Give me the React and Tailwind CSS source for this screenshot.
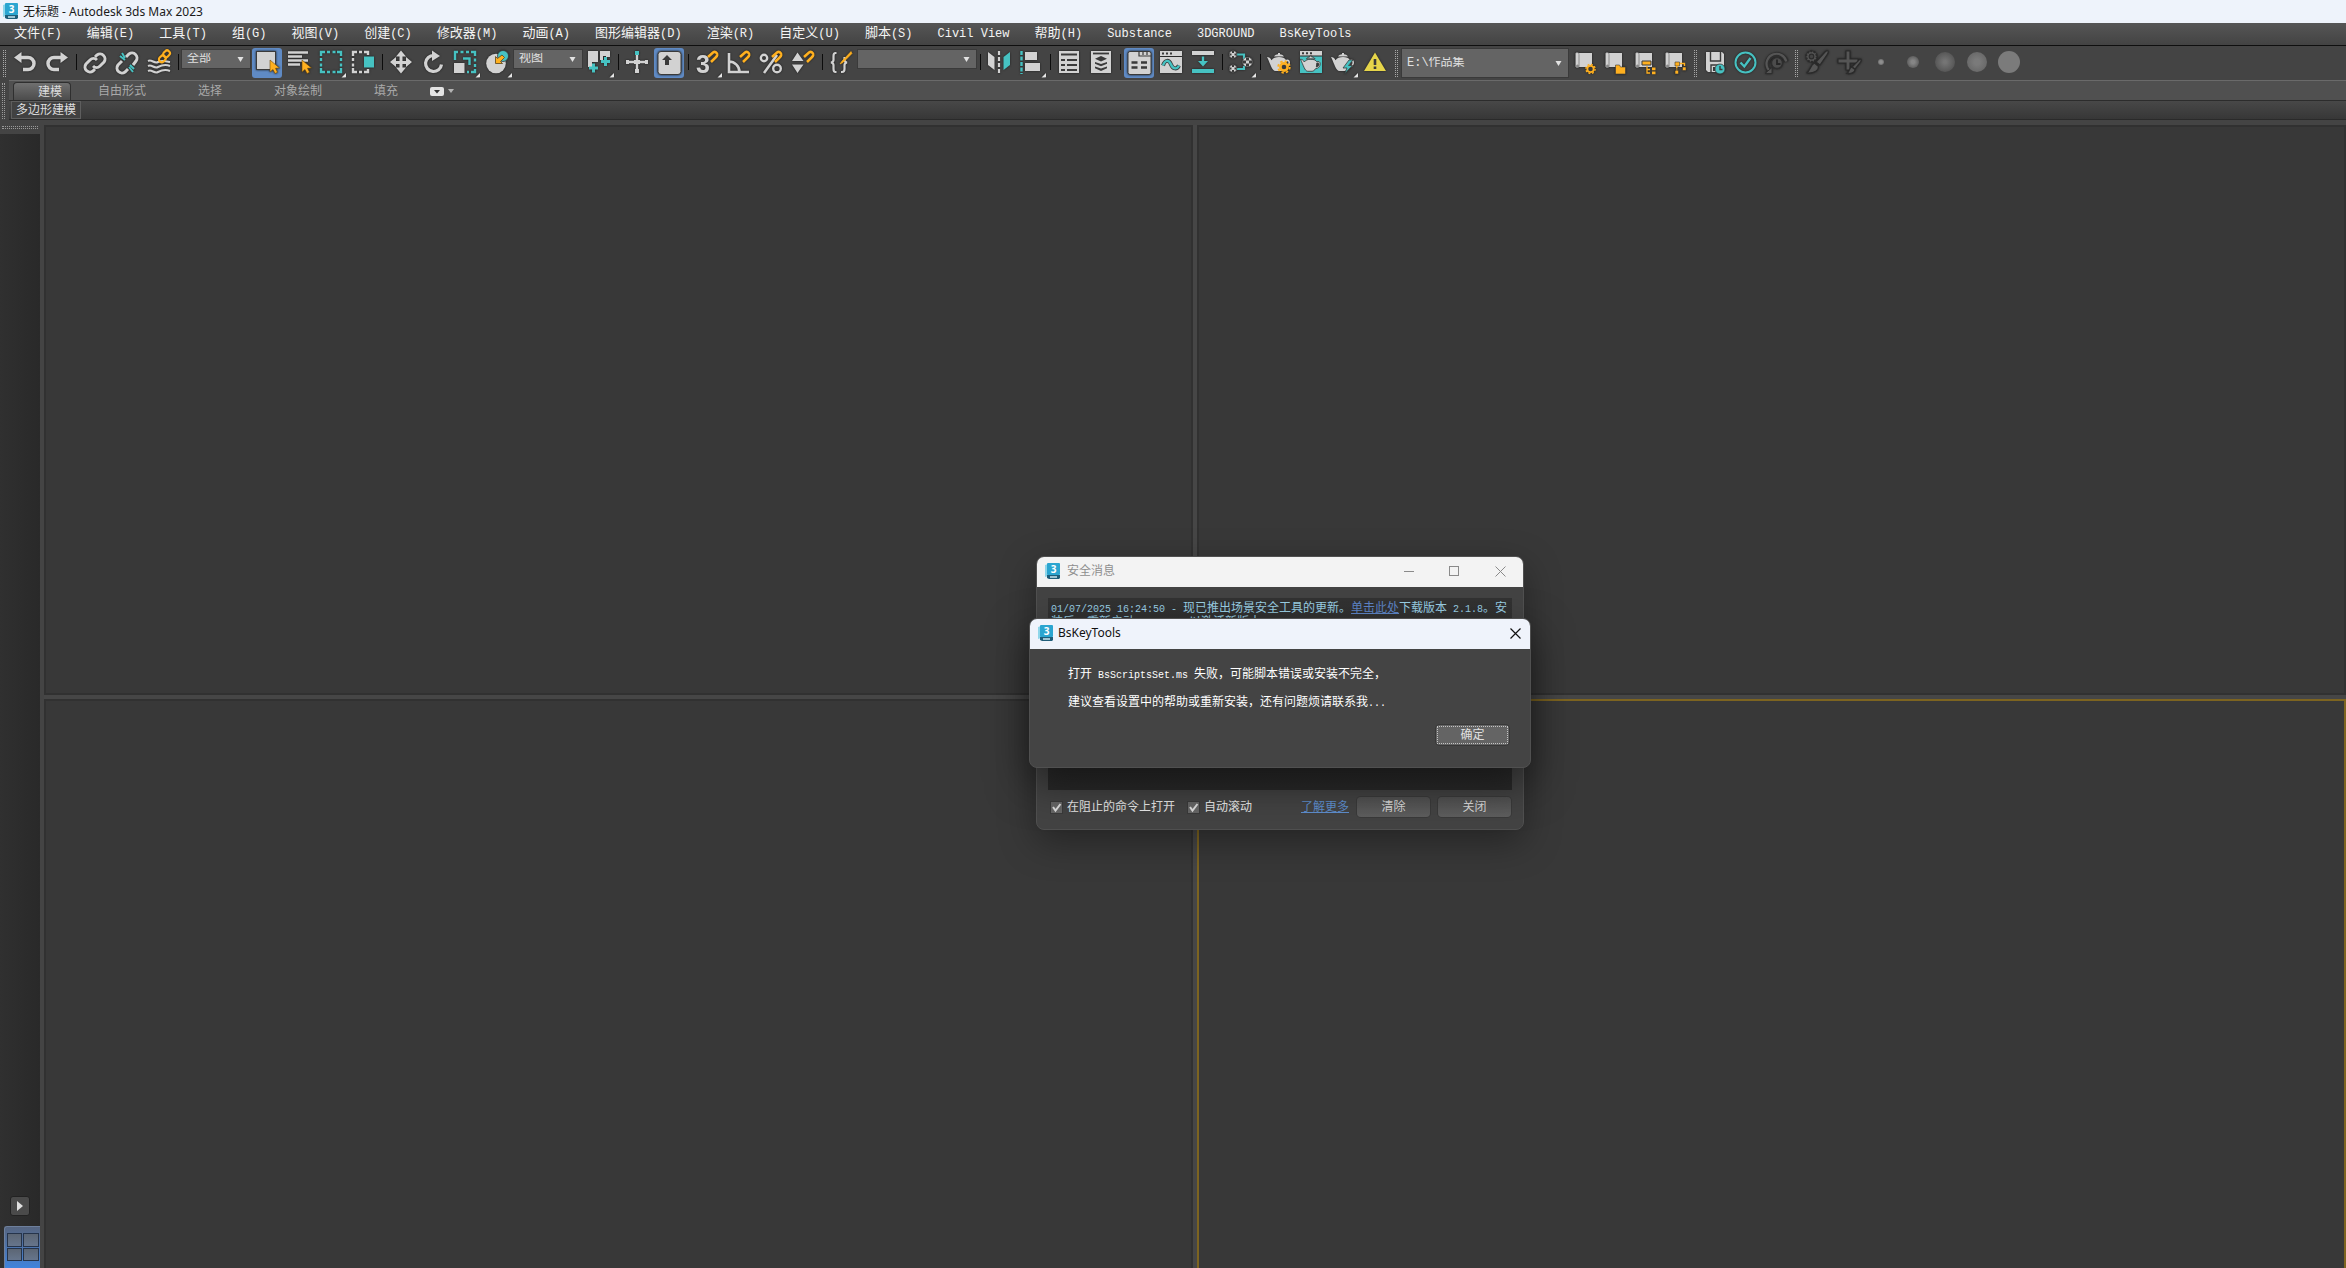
import React from "react";

const G = "#d2d2d2";
const T = "#46c2c2";
const O = "#ffb01f";
const D = "#3a3a3a";

const SANS = "font-['Noto_Sans','Noto_Sans_CJK_SC',sans-serif]";
const MONO = "font-['Liberation_Mono','Noto_Sans_CJK_SC',monospace]";

/* ---------- shared drawings ---------- */

function AppLogo() {
  return (
    <svg width="16" height="17" viewBox="0 0 16 17" aria-hidden="true" className="shrink-0">
      <path d="M0 2 3 1v12l-3 1z" fill="#8fd6ea" />
      <rect x="2" y="0" width="13" height="12" rx="1" fill="#2ba5d0" />
      <path d="M2 12h13v3l-1 1H4l-2-1z" fill="#1f5d79" />
      <rect x="5" y="13" width="7" height="2" fill="#9cc4d3" />
      <text x="8.500" y="9.500" fontSize="10" fontWeight="700" fill="#fff" textAnchor="middle" fontFamily="Open Sans, sans-serif">3</text>
    </svg>
  );
}

const Magnet = () => (
  <path d="M17 9l5-4.500c2-1.500 4.500.2 4.200 2.500-.2 1.200-.8 1.800-1.600 2.500L20 14" fill="none" stroke={O} strokeWidth="2.600" />
);
const Teapot = ({ fill = G }) => (
  <g fill={fill}>
    <path d="M4 9c2 0 3.500 1.200 4.500 3.200C10 10 12.500 9 16 9s6 1 7 3c2-1 4 0 4 2.500S24.500 20 21.500 20c-1 1.800-2.500 3-4 3h-5C9 23 7.500 16 4 9z" />
    <path d="M11 8.500c1-1.500 2.500-2 4-2.200V5h2v1.300c1.500.2 3 .7 4 2.200z" />
    <path d="M23 13.500c1.500-.5 2.500 0 2.500 1.200 0 1.600-1.300 3-3 3.300z" fill={D} />
  </g>
);
const Cursor = () => <path d="M19 12v12l3-2.500 2 4 2.500-1.200-2-4 4-.3z" fill={O} stroke="#6b4a10" strokeWidth=".6" />;
const Chain = () => (
  <>
    <path d="M14 18a5 5 0 0 0 7 0l4-4a5 5 0 0 0-7-7l-2 2" />
    <path d="M18 12a5 5 0 0 0-7 0l-4 4a5 5 0 0 0 7 7l2-2" />
  </>
);
const Scroll = () => (
  <>
    <path d="M8 5h14v14H8z" fill={G} />
    <path d="M7 4.500c-1.500 0-1.500 1-1.500 2V18c0 2 3.500 2 3.500 0V6.500c0-1.200-.5-2-2-2z" fill={G} stroke="#777" strokeWidth=".8" />
    <circle cx="7.500" cy="18" r="1.500" fill="#888" />
  </>
);

const ICONS = {
  undo: (
    <>
      <path d="M5 9.500 12.500 4v11z" fill={G} />
      <path d="M11 9.500h8a6 6 0 0 1 0 12h-5" fill="none" stroke={G} strokeWidth="3.500" />
    </>
  ),
  redo: (
    <>
      <path d="M27 9.500 19.500 4v11z" fill={G} />
      <path d="M21 9.500h-8a6 6 0 0 0 0 12h5" fill="none" stroke={G} strokeWidth="3.500" />
    </>
  ),
  link: (
    <g fill="none" stroke={G} strokeWidth="3">
      <Chain />
    </g>
  ),
  unlink: (
    <>
      <g fill="none" stroke={G} strokeWidth="3">
        <path d="M15 9l3-3a5 5 0 0 1 7 7l-3 4" />
        <path d="M11 13l-4 4a5 5 0 0 0 7 7l3-3" />
      </g>
      <path d="M9 8l5 4M11 5l3 5M19 17l4 4M18 19l4 5" stroke={T} strokeWidth="2" />
    </>
  ),
  bind: (
    <>
      <path d="M5 13c4-2 6 3 10 1s7-1 12 0M5 18c4-2 6 3 10 1s7-3 12-1M5 23c4-2 6 3 10 1s7-3 12-1" fill="none" stroke={G} strokeWidth="2" />
      <g fill="none" stroke={O} strokeWidth="2.200">
        <rect x="20" y="3.500" width="7" height="5.500" rx="2.500" transform="rotate(-45 23 6)" />
        <rect x="16" y="8" width="7" height="5.500" rx="2.500" transform="rotate(-45 19.500 11)" />
      </g>
    </>
  ),
  select: (
    <>
      <rect x="5.500" y="3.500" width="19" height="18" fill={G} stroke={D} />
      <Cursor />
    </>
  ),
  byName: (
    <>
      <path d="M5 4.500h20M5 8.500h14M5 12.500h20M5 16.500h12" stroke={G} strokeWidth="2.500" />
      <Cursor />
    </>
  ),
  region: (
    <path d="M6 8V4h4M22 4h4v4M26 20v4h-4M10 24H6v-4M12 4h3M17.500 4h3M12 24h3M17.500 24h3M6 10v3M6 15.500v3M26 10v3M26 15.500v3" fill="none" stroke={T} strokeWidth="2.400" />
  ),
  crossing: (
    <>
      <path d="M6 8V4h4M17 4h4v3M21 21v3h-4M10 24H6v-4M12 4h3M12 24h3M6 10v3M6 15.500v3" fill="none" stroke={G} strokeWidth="2.400" />
      <rect x="17" y="8.500" width="10" height="11" fill={T} />
    </>
  ),
  move: (
    <>
      <path d="M16 6v17M8 14.500h17" stroke={G} strokeWidth="3" />
      <path d="M16 2.500l5 6H11zM16 25.500l5-6H11zM5 14l6-5v10zM27 14l-6-5v10z" fill={G} />
    </>
  ),
  rotate: (
    <>
      <path d="M17 7.500a8 8 0 1 0 7.500 9" fill="none" stroke={G} strokeWidth="3.200" />
      <path d="M15 2.500l8 5.500-8 5z" fill={G} />
    </>
  ),
  scale: (
    <>
      <rect x="5" y="15" width="10.500" height="10" fill={G} />
      <path d="M6 12V4h3M11.500 4h3M17 4h3M22 4h4v4M26 10.500v3M26 16v3M26 21v3h-4M20 24h-2" fill="none" stroke={T} strokeWidth="2.400" />
      <path d="M14 10.500h6.500V17" fill="none" stroke={T} strokeWidth="2.400" />
    </>
  ),
  place: (
    <>
      <circle cx="15" cy="15.500" r="9.800" fill={G} />
      <circle cx="22" cy="8" r="5.500" fill={T} stroke={D} strokeWidth=".8" />
      <path d="M21 7l2.500 2.500-4 4 2 2h-7v-7l2 2z" fill={O} stroke="#5b4418" strokeWidth=".8" />
    </>
  ),
  pivot: (
    <>
      <path d="M5 3h10v11h-6v5H5zM17 3h10v6h-4v-1h-3v4h-3z" fill={G} />
      <path d="M10.500 15.500v9M6 20h9M22.500 9v9M18 13.500h9" stroke={T} strokeWidth="3" />
    </>
  ),
  manipulate: (
    <>
      <path d="M6 14h20M16 6v18" stroke={G} strokeWidth="2.400" />
      <path d="M5 12h3v4H5zM24 12h3v4h-3zM14 21h4v4h-4zM13 12h6v4h-6z" fill={G} />
      <rect x="14" y="3" width="4" height="4" fill={T} />
    </>
  ),
  keyboard: (
    <>
      <rect x="5" y="3.500" width="23" height="23" rx="3" fill={G} stroke={D} />
      <path d="M14 7l5 5h-3v5h-4v-5H9z" fill={D} />
    </>
  ),
  snap3: (
    <>
      <text x="5" y="25" fontSize="25" fontWeight="700" fill={G} fontFamily="Liberation Sans, sans-serif">3</text>
      <Magnet />
    </>
  ),
  angle: (
    <>
      <path d="M6 5v19h20M6 13.500A10.500 10.500 0 0 1 16.500 24" fill="none" stroke={G} strokeWidth="2.600" />
      <Magnet />
    </>
  ),
  percent: (
    <>
      <circle cx="9" cy="10" r="3.200" fill="none" stroke={G} strokeWidth="2.400" />
      <circle cx="22" cy="20.500" r="3.800" fill="none" stroke={G} strokeWidth="2.400" />
      <path d="M22 7 9 25" stroke={G} strokeWidth="2.600" />
      <Magnet />
    </>
  ),
  spinner: (
    <>
      <path d="M10.500 4.500l6 8.500H5zM10.500 25l6-8.500H5z" fill={G} />
      <Magnet />
    </>
  ),
  braces: (
    <>
      <path d="M11.500 5h-1Q8.500 5 8.500 8v4q0 2-2.500 2.500 2.500.5 2.500 2.500v4q0 3 2 3h1M16 24h1q2.500 0 2.500-3v-4q0-2 2.500-2.500-2.500-.5-2.500-2.500V9" fill="none" stroke={G} strokeWidth="2.200" />
      <path d="M26 3.500 17 13l-2 3 3-1.500 9-9z" fill={O} stroke={O} strokeWidth=".6" />
    </>
  ),
  mirror: (
    <>
      <path d="M5 4l6.500 5v13L5 17z" fill={G} />
      <path d="M27 4l-6.500 5v13l6.500-5z" fill={T} />
      <path d="M16 3v23" stroke={G} strokeWidth="2.200" strokeDasharray="4 2" />
    </>
  ),
  align: (
    <>
      <path d="M6.500 3v23" stroke={T} strokeWidth="2.400" strokeDasharray="4 1.500" />
      <path d="M10 4h12v8H10zM10 15h15v8H10z" fill={G} />
    </>
  ),
  layers: (
    <>
      <rect x="6" y="3" width="20" height="22" fill={G} />
      <path d="M8 6.500h16M8 12h4M14 12h10M8 17h4M14 17h10M8 22h4M14 22h10" stroke={D} strokeWidth="2.200" />
    </>
  ),
  stack: (
    <>
      <rect x="6" y="3" width="20" height="22" fill={G} />
      <path d="M8 5.500h16" stroke={D} strokeWidth="1.800" />
      <path d="M16 8l6 2.800-6 2.800-6-2.800zM10 14l6 2 6-2v1.800l-6 2.500-6-2.500zM10 18.500l6 2 6-2v1.800L16 23l-6-2.700z" fill={D} />
    </>
  ),
  ribbon: (
    <>
      <rect x="5" y="3.500" width="23" height="23" rx="2" fill={G} stroke={D} />
      <path d="M16 4v4h12M20 4v3M24 4v3" fill="none" stroke={D} strokeWidth="1.200" />
      <path d="M8.500 14.500h6M18 14.500h6M8.500 19.500h6M18 19.500h6" stroke={D} strokeWidth="2.600" />
    </>
  ),
  curve: (
    <>
      <path d="M5 3h22v5H5zM5 9h22v16H5z" fill={G} />
      <path d="M7 5.500h2M11 5.500h2M15 5.500h2" stroke={D} strokeWidth="2" />
      <path d="M8 17.500c2-6 6-6 8-1s6 5 8 1" fill="none" stroke={D} strokeWidth="4" />
      <path d="M8 17.500c2-6 6-6 8-1s6 5 8 1" fill="none" stroke={T} strokeWidth="2.400" />
    </>
  ),
  dope: (
    <>
      <path d="M5 3h22v4H5z" fill={G} />
      <path d="M5 21h22v4H5z" fill={T} />
      <path d="M14.800 8.500h2.400V13h3.800l-5 5.500-5-5.500h3.800z" fill={T} />
    </>
  ),
  schematic: (
    <>
      <path d="M12 6.500h7V11M12 21h7v-3" fill="none" stroke={T} strokeWidth="2.200" />
      <g fill={G} stroke={D} strokeWidth=".6">
        <circle cx="8" cy="6.500" r="3.800" />
        <circle cx="8" cy="20.500" r="3.800" />
        <circle cx="22.500" cy="14" r="5" />
      </g>
      <g fill={D}>
        <path d="M7 3h2v2H7zM7 8h2v2H7zM4.500 5.500h2v2h-2zM9.500 5.500h2v2h-2zM7 17h2v2H7zM7 22h2v2H7zM4.500 19.500h2v2h-2zM9.500 19.500h2v2h-2z" />
        <path d="M21 9.500h3v3h-3zM21 15.500h3v3h-3zM18 12.500h3v3h-3zM24 12.500h3v3h-3z" />
      </g>
    </>
  ),
  renderSetup: (
    <>
      <Teapot />
      <circle cx="21" cy="19" r="3.600" fill={D} stroke={O} strokeWidth="2.600" />
      <circle cx="21" cy="19" r="5.800" fill="none" stroke={O} strokeWidth="1.800" strokeDasharray="2.400 2.150" />
    </>
  ),
  frame: (
    <>
      <path d="M5 3h22v4.500H5z" fill={G} />
      <path d="M7 5.200h2M11 5.200h2M15 5.200h2" stroke={D} strokeWidth="2" />
      <path d="M5 8.500h22V25H5z" fill={T} />
      <g transform="translate(2 3.500) scale(.86)">
        <g stroke={D} strokeWidth="1"><Teapot /></g>
      </g>
    </>
  ),
  render: (
    <>
      <Teapot />
      <path d="M22 12l-6 8h4l-2.500 6 8-8.500h-4L26 12z" fill={T} stroke={D} strokeWidth=".8" />
    </>
  ),
  warning: (
    <>
      <path d="M16 4.500 27 23H5z" fill="#e6d54a" />
      <path d="M16 11v6M16 18.500V21" stroke={D} strokeWidth="2.600" />
    </>
  ),
  projGear: (
    <>
      <Scroll />
      <circle cx="20.500" cy="21" r="3.200" fill={D} stroke={O} strokeWidth="1.800" />
      <circle cx="20.500" cy="21" r="4.600" fill="none" stroke={O} strokeWidth="1.400" strokeDasharray="1.900 1.700" />
    </>
  ),
  projFolder: (
    <>
      <Scroll />
      <path d="M15.500 17h4l1 2h5v7h-10z" fill={O} stroke={D} strokeWidth=".6" />
    </>
  ),
  projTree: (
    <>
      <Scroll />
      <path d="M12 13h9v4h-9z" fill={O} stroke={D} />
      <path d="M17 18v7h3M17 21.500h3" fill="none" stroke={O} strokeWidth="1.300" />
      <path d="M22 19.500h3.500v2.800H22zM22 23.500h3.500v2.800H22z" fill={O} />
    </>
  ),
  projNodes: (
    <>
      <Scroll />
      <path d="M15 14h4.500v4H15zM22.500 19h3.500v3.500h-3.500zM15 22.500h3.500V26H15z" fill={O} stroke={D} strokeWidth=".6" />
      <path d="M16.800 18v2.500M16.800 21.500v1M20 15.500h4.500V18" fill="none" stroke={O} strokeWidth="1.400" />
    </>
  ),
  autosave: (
    <>
      <path d="M6 4h16l2 2v18H8l-2-2z" fill={G} />
      <path d="M10.500 4v9h10V4M11 24v-7h8" fill="none" stroke={D} strokeWidth="1.400" />
      <rect x="13" y="19" width="2" height="4" fill={D} />
      <circle cx="20" cy="21" r="5" fill={T} stroke={D} strokeWidth=".8" />
      <path d="M20 18v3.500h2.500" fill="none" stroke={D} strokeWidth="1.400" />
    </>
  ),
  approved: (
    <>
      <circle cx="15.500" cy="14.500" r="10" fill="none" stroke={T} strokeWidth="2" />
      <path d="M10.500 14.500l3.800 4L20.500 10" fill="none" stroke={T} strokeWidth="2.400" />
    </>
  ),
  history: (
    <>
      <path d="M10 24.500 7.500 20a10 10 0 1 1 19-6.500" fill="none" stroke="#2e2e2e" strokeWidth="4.400" />
      <path d="M9.500 23 7.500 20a10 10 0 1 1 18.800-6.500" fill="none" stroke="#555" strokeWidth="2.200" />
      <circle cx="17" cy="15" r="5.500" fill="#4c4c4c" stroke="#2e2e2e" strokeWidth="1.400" />
      <path d="M17 11.500V16h3.500" fill="none" stroke="#262626" strokeWidth="1.800" />
      <path d="M5 25.500h7v-6z" fill="#555" stroke="#2e2e2e" />
    </>
  ),
  brushGear: (
    <g stroke="#2b2b2b" strokeWidth="1.200" fill="#555">
      <circle cx="10.500" cy="8.500" r="5.300" strokeDasharray="2 1.300" strokeWidth="2" />
      <circle cx="10.500" cy="8.500" r="2.300" fill="#444" />
      <path d="M26 2.500c1.500 0 1.500 2 .5 3.500L19 17l-4-3L24 4z" />
      <path d="M13.500 15l4 3.500c0 3.500-3 7-12 6.500 4-1.500 3.500-8 8-10z" />
    </g>
  ),
  brushPlus: (
    <g stroke="#2b2b2b" strokeWidth="1.200" fill="#555">
      <path d="M13 3h4v8h8v4h-8v7h-4v-7H5v-4h8z" />
      <path d="M27 11c1.500 0 1.500 1.500.5 3L22 21l-3-2z" />
      <path d="M18.500 19l3.500 2.500c0 2.500-3 4.500-8 4 2.500-1.500 2-5 4.500-6.500z" />
    </g>
  ),
};

/* ---------- toolbar parts ---------- */

function Tool({ name, label, active, flyout, small }) {
  return (
    <button
      type="button"
      aria-label={label}
      className={`relative h-[30px] shrink-0 ${small ? "w-[30px]" : "w-8"}`}
    >
      <span className={`flex h-[30px] justify-center overflow-hidden rounded-[3px] ${active ? "mx-px bg-[#5f8ac4]" : ""}`}>
        <svg
          width={small ? 30 : 32}
          height="30"
          viewBox={small ? "0 0 30 30" : "0 0 32 30"}
          className="shrink-0 drop-shadow-[0_0_1px_#1c1c1c]"
          aria-hidden="true"
        >
          {ICONS[name]}
          {flyout && <path d="M31 25v4.500h-4.500z" fill="#e6e6e6" />}
        </svg>
      </span>
    </button>
  );
}

const Sep = () => (
  <span className="flex w-1.5 shrink-0 justify-center">
    <span className="mt-1.5 h-4 w-px bg-[#0c0c0c]" />
  </span>
);

const Grip = () => <span className="mt-0.5 h-[27px] w-[3px] shrink-0 border-x border-dotted border-[#a8a8a8]" />;

function Combo({ label, value, width, tall }) {
  return (
    <span className={`relative block shrink-0 border border-[#3a3a3a] bg-[#646464] ${width} ${tall ? "h-[30px]" : "mt-px h-5"}`}>
      <select aria-label={label} className={`block h-full w-full appearance-none bg-transparent pl-[5px] text-xs leading-none text-[#e0e0e0] outline-none ${MONO}`}>
        <option>{value}</option>
      </select>
      <svg width="7" height="5" viewBox="0 0 7 5" className="pointer-events-none absolute right-1.5 top-1/2 -mt-0.5" aria-hidden="true">
        <path d="M.5 0h6L3.500 5z" fill="#e2e2e2" />
      </svg>
    </span>
  );
}

const BRUSHES = [
  ["size-1.5", "bg-[radial-gradient(circle,#8f8f8f_30%,#555_100%)]"],
  ["size-3", "bg-[radial-gradient(circle,#858585_20%,#4a4a4a_100%)]"],
  ["size-5", "bg-[radial-gradient(circle,#757575_10%,#484848_100%)]"],
  ["size-5", "bg-[radial-gradient(circle,#7a7a7a_20%,#606060_100%)]"],
  ["size-[22px]", "bg-[#7b7b7b]"],
];

function Toolbar() {
  return (
    <div className="flex h-[35px] shrink-0 items-start border-t border-[#0f0f0f] bg-[#444] pl-[3px] pt-0.5" role="toolbar" aria-label="主工具栏">
      <Grip />
      <span className="w-[3px] shrink-0" />
      <Tool name="undo" label="撤消" />
      <Tool name="redo" label="重做" />
      <Sep />
      <Tool name="link" label="链接" />
      <Tool name="unlink" label="取消链接" />
      <Tool name="bind" label="绑定到空间扭曲" />
      <Sep />
      <Combo label="选择过滤器" value="全部" width="w-[70px]" />
      <Tool name="select" label="选择对象" active />
      <Tool name="byName" label="按名称选择" />
      <Tool name="region" label="矩形选择区域" flyout />
      <Tool name="crossing" label="窗口/交叉" />
      <Sep />
      <Tool name="move" label="选择并移动" />
      <Tool name="rotate" label="选择并旋转" />
      <Tool name="scale" label="选择并缩放" flyout />
      <Tool name="place" label="选择并放置" flyout />
      <Combo label="参考坐标系" value="视图" width="w-[70px]" />
      <Tool name="pivot" label="使用轴点中心" flyout />
      <Sep />
      <Tool name="manipulate" label="选择并操纵" />
      <Tool name="keyboard" label="键盘快捷键覆盖切换" active />
      <Sep />
      <Tool name="snap3" label="捕捉开关" flyout />
      <Tool name="angle" label="角度捕捉" />
      <Tool name="percent" label="百分比捕捉" />
      <Tool name="spinner" label="微调器捕捉" />
      <Sep />
      <Tool name="braces" label="编辑命名选择集" />
      <Combo label="命名选择集" value="" width="w-[120px]" />
      <Sep />
      <Tool name="mirror" label="镜像" />
      <Tool name="align" label="对齐" flyout />
      <Sep />
      <Tool name="layers" label="场景资源管理器" />
      <Tool name="stack" label="层资源管理器" />
      <Sep />
      <Tool name="ribbon" label="显示功能区" active />
      <Tool name="curve" label="曲线编辑器" />
      <Tool name="dope" label="图解视图" />
      <Sep />
      <Tool name="schematic" label="材质编辑器" flyout />
      <Sep />
      <Tool name="renderSetup" label="渲染设置" />
      <Tool name="frame" label="渲染帧窗口" />
      <Tool name="render" label="渲染产品" flyout />
      <Tool name="warning" label="安全警告" />
      <span className="w-1 shrink-0" />
      <Grip />
      <span className="w-[3px] shrink-0" />
      <Combo label="项目文件夹" value="E:\作品集" width="w-[168px]" tall />
      <span className="w-px shrink-0" />
      <Tool name="projGear" label="项目设置" small />
      <Tool name="projFolder" label="打开项目" small />
      <Tool name="projTree" label="项目结构" small />
      <Tool name="projNodes" label="项目节点" small />
      <span className="w-1 shrink-0" />
      <Grip />
      <span className="w-[3px] shrink-0" />
      <Tool name="autosave" label="自动备份" small />
      <Tool name="approved" label="安全检查" small />
      <Tool name="history" label="历史" />
      <span className="w-[3px] shrink-0" />
      <Grip />
      <span className="w-[3px] shrink-0" />
      <Tool name="brushGear" label="笔刷设置" />
      <Tool name="brushPlus" label="添加笔刷" />
      {BRUSHES.map(([size, fill], i) => (
        <button key={i} type="button" aria-label={`笔刷 ${i + 1}`} className="flex h-7 w-8 shrink-0 items-center justify-center">
          <span className={`rounded-full ${size} ${fill}`} />
        </button>
      ))}
    </div>
  );
}

/* ---------- menu and ribbon ---------- */

const MENU = [
  ["文件", "(F)"], ["编辑", "(E)"], ["工具", "(T)"], ["组", "(G)"], ["视图", "(V)"], ["创建", "(C)"],
  ["修改器", "(M)"], ["动画", "(A)"], ["图形编辑器", "(D)"], ["渲染", "(R)"], ["自定义", "(U)"],
  ["脚本", "(S)"], ["", "Civil View"], ["帮助", "(H)"], ["", "Substance"], ["", "3DGROUND"], ["", "BsKeyTools"],
];

function MenuBar() {
  return (
    <nav className={`flex h-[22px] shrink-0 items-center gap-[25px] bg-gradient-to-b from-[#565656] to-[#434343] pl-3.5 text-xs text-[#f4f4f4] ${MONO}`}>
      {MENU.map(([cjk, latin]) => (
        <button key={cjk + latin} type="button" className="flex h-5 shrink-0 items-center whitespace-nowrap">
          {cjk && <span className="text-[13px]">{cjk}</span>}
          <span>{latin}</span>
        </button>
      ))}
    </nav>
  );
}

function Ribbon() {
  const tab = "h-[18px] shrink-0 leading-[18px] text-[#a9a9a9]";
  return (
    <div className="flex shrink-0 bg-[#444]">
      <span className="ml-0.5 mr-1 mt-[3px] h-9 w-[3px] shrink-0 border-x border-dotted border-[#9a9a9a]" />
      <div className={`min-w-0 flex-1 text-xs ${SANS}`}>
        <div className="flex h-[21px] items-end border-b border-t border-b-[#2c2c2c] border-t-[#6a6a6a] bg-[#505050] pl-1">
          <button type="button" className="h-[18px] w-[58px] shrink-0 rounded-t-sm border border-b-0 border-[#2f2f2f] bg-gradient-to-b from-[#707070] to-[#4c4c4c] pl-4 leading-4 text-[#dcdcdc]">
            建模
          </button>
          <button type="button" className={`${tab} ml-[27px]`}>自由形式</button>
          <button type="button" className={`${tab} ml-[52px]`}>选择</button>
          <button type="button" className={`${tab} ml-[52px]`}>对象绘制</button>
          <button type="button" className={`${tab} ml-[52px]`}>填充</button>
          <button type="button" aria-label="功能区选项" className="ml-8 flex h-[18px] items-center gap-1">
            <svg width="14" height="9" viewBox="0 0 14 9" aria-hidden="true">
              <rect width="14" height="9" rx="2" fill="#e4e4e4" />
              <path d="M4 3h6L7 6.500z" fill="#333" />
            </svg>
            <svg width="6" height="4" viewBox="0 0 6 4" aria-hidden="true">
              <path d="M0 0h6L3 4z" fill="#b4b4b4" />
            </svg>
          </button>
        </div>
        <div className="flex h-[19px] border-b border-[#2a2a2a] bg-gradient-to-b from-[#484848] to-[#373737] pl-0.5">
          <button type="button" className="h-[18px] w-[70px] shrink-0 border border-[#5e5e5e] bg-[#414141] text-center leading-4 text-[#dedede]">
            多边形建模
          </button>
        </div>
      </div>
    </div>
  );
}

/* ---------- dialogs ---------- */

const Lat = ({ children }) => <span className="text-[10px] leading-none">{children}</span>;

function SecurityDialog() {
  const btn = "h-5 w-[73px] rounded-sm bg-gradient-to-b from-[#505050] to-[#5e5e5e] text-center leading-5 text-[#d8d8d8] shadow-[0_0_0_1px_#3a3a3a]";
  return (
    <section aria-label="安全消息" className={`absolute left-[1036px] top-[556px] w-[488px] overflow-hidden rounded-lg border border-[#505050] bg-[#434343] text-xs shadow-[0_12px_36px_rgba(0,0,0,0.35)] ${SANS}`}>
      <header className="flex h-[30px] items-center bg-[#f3f3f3] pb-0.5 pl-2 text-[#8e8e8e]">
        <AppLogo />
        <h2 className="ml-1.5 flex-1">安全消息</h2>
        <button type="button" aria-label="最小化" className="flex h-full w-11 items-center justify-center">
          <span className="h-px w-2.5 bg-[#8a8a8a]" />
        </button>
        <button type="button" aria-label="最大化" className="flex h-full w-[46px] items-center justify-center">
          <span className="size-2.5 border border-[#8a8a8a]" />
        </button>
        <button type="button" aria-label="关闭窗口" className="flex h-full w-[46px] items-center justify-center">
          <svg width="11" height="11" viewBox="0 0 11 11" aria-hidden="true"><path d="M.5.5l10 10M10.500.5l-10 10" stroke="#8a8a8a" /></svg>
        </button>
      </header>
      <div className={`mx-[11px] mt-[11px] h-48 bg-gradient-to-b from-[#323232] to-[#2a2a2a] pl-[3px] pt-1 leading-[14px] text-[#9bd0e6] ${MONO}`}>
        <Lat>01/07/2025 16:24:50 - </Lat>现已推出场景安全工具的更新。<a href="#update" className="text-[#5f86c8] underline">单击此处</a>下载版本<Lat> 2.1.8</Lat>。安装后，重新启动<Lat> 3ds Max </Lat>以激活新版本。
      </div>
      <footer className="flex items-center pb-3 pl-[13px] pr-3 pt-[7px] text-[#e8e8e8]">
        {["在阻止的命令上打开", "自动滚动"].map((t) => (
          <label key={t} className="mr-3 flex items-center">
            <span className="relative mr-1 block size-[13px]">
              <input type="checkbox" defaultChecked className="block size-[13px] appearance-none border border-[#3a3a3a] bg-[#666]" />
              <svg width="13" height="13" viewBox="0 0 13 13" className="pointer-events-none absolute inset-0" aria-hidden="true">
                <path d="M3 6l2.500 3.500L10.500 3" fill="none" stroke="#dcdcdc" strokeWidth="2" />
              </svg>
            </span>
            {t}
          </label>
        ))}
        <a href="#more" className="ml-auto mr-2 text-[#5f8fce] underline">了解更多</a>
        <button type="button" className={`${btn} mr-2`}>清除</button>
        <button type="button" className={btn}>关闭</button>
      </footer>
    </section>
  );
}

function ErrorDialog() {
  return (
    <section role="alertdialog" aria-label="BsKeyTools" className={`absolute left-[1029px] top-[618px] w-[502px] overflow-hidden rounded-lg border border-[#505050] bg-[#444] text-xs shadow-[0_16px_40px_rgba(0,0,0,0.5)] ${SANS}`}>
      <header className="flex h-[30px] items-center bg-[#eff3fb] pb-0.5 pl-2 text-[#111]">
        <AppLogo />
        <h2 className="ml-1 flex-1">BsKeyTools</h2>
        <button type="button" aria-label="关闭窗口" className="flex h-full w-[30px] items-center justify-center">
          <svg width="11" height="11" viewBox="0 0 11 11" aria-hidden="true"><path d="M.5.5l10 10M10.500.5l-10 10" stroke="#111" strokeWidth="1.200" /></svg>
        </button>
      </header>
      <div className={`px-[38px] pt-3 leading-7 text-white ${MONO}`}>
        <p>打开<Lat> BsScriptsSet.ms </Lat>失败，可能脚本错误或安装不完全，</p>
        <p>建议查看设置中的帮助或重新安装，还有问题烦请联系我<Lat>...</Lat></p>
      </div>
      <div className="flex justify-end pb-[22px] pr-[21px] pt-2">
        <button type="button" className="h-5 w-[73px] rounded-sm bg-[#646464] p-px text-[#e0e0e0] shadow-[0_0_0_1px_#383838]">
          <span className="block h-[18px] border border-dotted border-[#c4c4c4] text-center leading-4">确定</span>
        </button>
      </div>
    </section>
  );
}

/* ---------- page ---------- */

export default function App() {
  const pane = "border-2 border-[#313131] bg-[#383838]";
  return (
    <div className="relative flex h-screen flex-col overflow-hidden bg-[#444]">
      <header className={`flex h-[23px] shrink-0 items-center bg-[#eef3fb] pl-[3px] text-xs text-[#1a1a1a] ${SANS}`}>
        <AppLogo />
        <h1 className="ml-1">无标题 - Autodesk 3ds Max 2023</h1>
      </header>
      <MenuBar />
      <Toolbar />
      <Ribbon />
      <div className="flex min-h-0 flex-1">
        <aside className="flex w-10 shrink-0 flex-col">
          <span className="ml-0.5 mt-1.5 h-[3px] w-9 shrink-0 border-y border-dotted border-[#9a9a9a]" />
          <div className="mt-[5px] flex flex-1 flex-col justify-end bg-gradient-to-r from-[#303030] to-[#292929]">
            <button type="button" aria-label="展开视口布局" className="mb-2.5 ml-2.5 flex size-5 items-center justify-center rounded-[3px] border border-[#222] bg-[#4a4a4a]">
              <svg width="6" height="10" viewBox="0 0 6 10" aria-hidden="true"><path d="M0 0l6 5-6 5z" fill="#e0e0e0" /></svg>
            </button>
            <button type="button" aria-label="四视口布局" className="ml-1 flex h-[42px] justify-center rounded-tl-[3px] border-l border-t border-[#6d7f9c] bg-gradient-to-b from-[#566580] to-[#3f83dc] pt-1.5">
              <span className="grid h-7 w-8 grid-cols-2 grid-rows-2 gap-px">
                {[0, 1, 2, 3].map((i) => (
                  <span key={i} className="border border-[#26344a] bg-gradient-to-b from-[#5c6674] to-[#66758c]" />
                ))}
              </span>
            </button>
          </div>
        </aside>
        <main className="ml-1 mt-[5px] grid min-w-0 flex-1 grid-cols-2 grid-rows-2 gap-1 bg-[#464646]">
          <div className={pane} />
          <div className={pane} />
          <div className={`${pane} border-b-0`} />
          <div className="border-2 border-b-0 border-[#7d6420] bg-[#383838]" />
        </main>
      </div>
      <SecurityDialog />
      <ErrorDialog />
    </div>
  );
}
